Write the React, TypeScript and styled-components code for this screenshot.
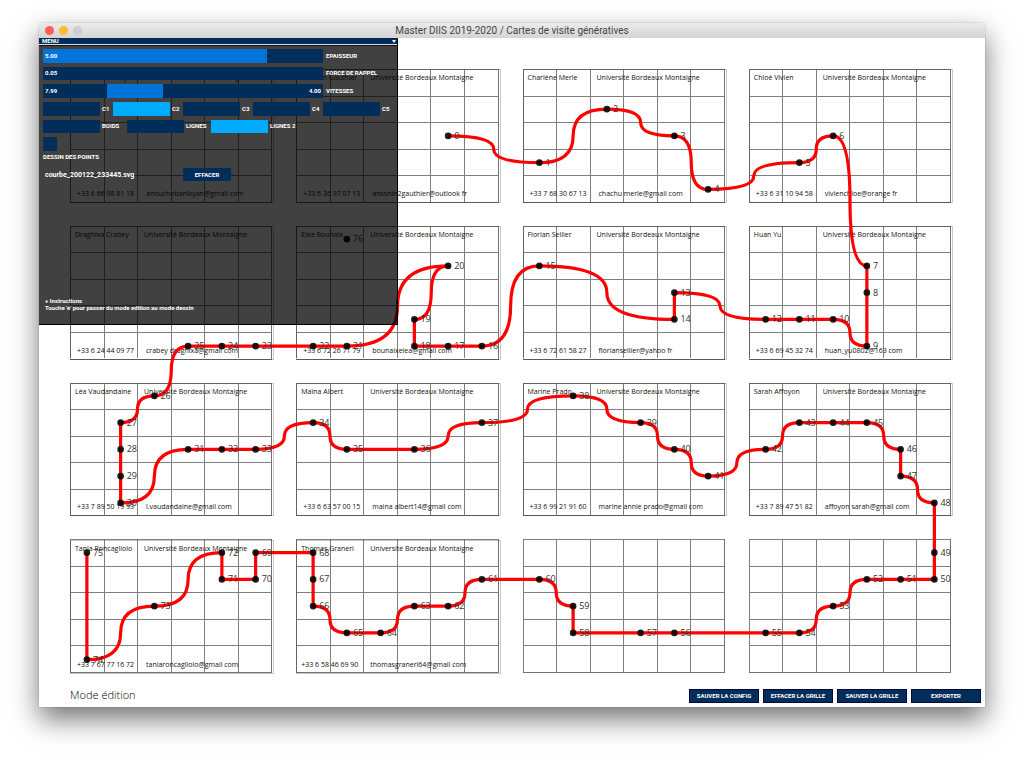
import React, { useState } from "react";
import styled, { createGlobalStyle } from "styled-components";

const GlobalStyle = createGlobalStyle`
  *, *::before, *::after { box-sizing: border-box; }
  body { margin: 0; background: #fff; font-family: "Open Sans", sans-serif; }
`;

const NAVY = "#002d5a";
const BLUE = "#0074d9";
const CYAN = "#00aaff";
const PIXEL_FONT = `Roboto, "Liberation Sans", sans-serif`;

const Desktop = styled.div`
  padding: 23px 39px 56px;
`;

const Window = styled.main`
  background: #fff;
  box-shadow: 0 0 1px rgba(0, 0, 0, 0.4), 0 12px 26px rgba(0, 0, 0, 0.55);
`;

const TitleBar = styled.header`
  display: grid;
  grid-template-columns: 1fr auto 1fr;
  align-items: center;
  height: 15px;
  padding: 0 6px;
  border-radius: 3px 3px 0 0;
  background: linear-gradient(#ebebeb, #d4d4d4);
`;

const Lights = styled.div`
  display: flex;
  gap: 5px;
`;

const Light = styled.button<{ $color: string }>`
  width: 9px;
  height: 9px;
  padding: 0;
  border: 0;
  border-radius: 50%;
  background: ${(p) => p.$color};
`;

const Title = styled.h1`
  margin: 0;
  font: 400 10px/15px Roboto, sans-serif;
  color: #444;
`;

const Canvas = styled.section`
  position: relative;
`;

const BoardArea = styled.div`
  padding: 31px 34px 16px 31px;
`;

const Board = styled.div`
  position: relative;
  display: grid;
  aspect-ratio: 881 / 604;
  grid-template-columns: 809fr 96fr 809fr 96fr 809fr 96fr 809fr;
  grid-template-rows: 535fr 92fr 535fr 92fr 535fr 92fr 535fr;
`;

const Card = styled.article<{ $col: number; $row: number }>`
  display: grid;
  grid-column: ${(p) => p.$col * 2 + 1};
  grid-row: ${(p) => p.$row * 2 + 1};
  min-width: 0;
  min-height: 0;

  & > * {
    grid-area: 1 / 1;
  }
`;

const Frame = styled.div<{ $shift: number }>`
  margin: ${(p) => p.$shift}px -2px -${(p) => p.$shift}px 0;
  border: 1px solid #c8c8c8;
`;

const Cells = styled.div`
  display: grid;
  grid-template: repeat(5, 1fr) / repeat(6, 1fr);
  border: solid rgba(0, 0, 0, 0.55);
  border-width: 0 1px 1px 0;
`;

const Cell = styled.span`
  border: solid rgba(0, 0, 0, 0.5);
  border-width: 1px 0 0 1px;
`;

const Details = styled.div<{ $shift: number }>`
  display: grid;
  grid-template-columns: 69px 1fr;
  align-content: space-between;
  padding: ${(p) => 4 + p.$shift}px 0 ${(p) => 4 - p.$shift}px 5px;
  font: 500 7px/10px "Open Sans", sans-serif;
  color: #111;
  white-space: nowrap;
`;

const Contact = styled.span<{ $indent: number }>`
  padding-left: ${(p) => p.$indent}px;
`;

const Drawing = styled.svg`
  position: absolute;
  inset: 0;
  width: 100%;
  height: 100%;
  overflow: visible;
`;

const PointLabel = styled.text`
  font: 400 9px "Open Sans", sans-serif;
  fill: #333;
`;

const Footer = styled.footer`
  display: flex;
  align-items: center;
  justify-content: space-between;
  padding: 0 4px 4px 31px;
`;

const Mode = styled.p`
  margin: 0;
  padding-bottom: 3px;
  font: 300 11px/11px "Open Sans", sans-serif;
  color: #000;
`;

const Actions = styled.div`
  display: flex;
  gap: 4px;
`;

const PixelButton = styled.button<{ $width: number; $framed?: boolean }>`
  width: ${(p) => p.$width}px;
  height: ${(p) => (p.$framed ? 14 : 13)}px;
  padding: 0;
  border: ${(p) => (p.$framed ? "1px solid #000a3c" : "0")};
  background: ${NAVY};
  color: #fff;
  font: 700 6px/12px ${PIXEL_FONT};
  text-transform: uppercase;
  white-space: nowrap;
`;

const Menu = styled.aside`
  position: absolute;
  top: 0;
  left: 0;
  display: flex;
  flex-direction: column;
  width: 359px;
  height: 287px;
  border: solid #000;
  border-width: 0 1px 1px 0;
  color: #fff;
  font: 700 6px/10px ${PIXEL_FONT};
`;

const MenuHeader = styled.button`
  display: flex;
  align-items: center;
  justify-content: space-between;
  flex: none;
  height: 7px;
  padding: 0 1px 0 3px;
  border: 0;
  border-bottom: 1px solid #d8dde4;
  overflow: hidden;
  background: ${NAVY};
  color: #fff;
  font: inherit;
  line-height: 6px;
`;

const MenuBody = styled.div`
  display: flex;
  flex: 1;
  flex-direction: column;
  padding: 3px 0 13px 4px;
  border-top: 1px solid #111;
  background: rgba(0, 0, 0, 0.745);
`;

const Controls = styled.div`
  display: grid;
  grid-auto-rows: 1fr;
  gap: 4px;
  height: 102px;
`;

const SliderRow = styled.label`
  display: grid;
  grid-template-columns: 280px 1fr;
  column-gap: 3px;
  align-items: center;
`;

const Track = styled.span<{ $from: number; $to: number }>`
  display: grid;
  height: 100%;
  align-items: center;
  background: linear-gradient(
    90deg,
    ${NAVY} ${(p) => p.$from}%,
    ${BLUE} ${(p) => p.$from}%,
    ${BLUE} ${(p) => p.$to}%,
    ${NAVY} ${(p) => p.$to}%
  );

  & > * {
    grid-area: 1 / 1;
  }
`;

const RangeInput = styled.input`
  appearance: none;
  width: 100%;
  height: 100%;
  margin: 0;
  background: transparent;
  pointer-events: none;

  &::-webkit-slider-thumb {
    appearance: none;
    width: 8px;
    height: 13px;
    background: transparent;
    pointer-events: auto;
  }
`;

const Value = styled.span`
  display: flex;
  justify-content: space-between;
  padding: 0 2px;
  pointer-events: none;
`;

const ToggleRow = styled.div<{ $pitch: number }>`
  display: grid;
  grid-template-columns: repeat(auto-fill, ${(p) => p.$pitch}px);
`;

const ToggleLabel = styled.label`
  display: flex;
  align-items: center;
  gap: 2px;
  white-space: nowrap;
`;

const Toggle = styled.input<{ $width: number }>`
  appearance: none;
  flex: none;
  width: ${(p) => p.$width}px;
  height: 100%;
  margin: 0;
  background: ${NAVY};

  &:checked {
    background: ${CYAN};
  }
`;

const Caption = styled.label`
  margin-top: 1px;
`;

const FileRow = styled.div`
  display: grid;
  grid-template-columns: 138px auto;
  align-items: center;
  justify-content: start;
  margin-top: 6px;
  padding-left: 2px;
  font-size: 7px;
`;

const Instructions = styled.p`
  margin: auto 0 0;
  padding-left: 2px;
  line-height: 7px;
`;

type Person = { name: string; phone: string; mail: string; indent?: number };

const SCHOOL = "Université Bordeaux Montaigne";

const PEOPLE: (Person | null)[] = [
  { name: "Anouche Banikyan", phone: "+33 6 66 98 81 18", mail: "anouchebanikyan@gmail com" },
  { name: "Antonin Gauthier", phone: "+33 6 36 97 07 13", mail: "antonin2gauthier@outlook fr" },
  { name: "Charlène Merle", phone: "+33 7 68 30 67 13", mail: "chachu merle@gmail com" },
  { name: "Chloé Vivien", phone: "+33 6 31 10 94 58", mail: "vivienchloe@orange fr" },
  { name: "Draghixa Crabey", phone: "+33 6 24 44 09 77", mail: "crabey draghixa@gmail com" },
  { name: "Eléa Bounaix", phone: "+33 6 72 26 71 79", mail: "bounaixelea@gmail com" },
  { name: "Florian Sellier", phone: "+33 6 72 61 58 27", mail: "floriansellier@yahoo fr" },
  { name: "Huan Yu", phone: "+33 6 69 45 32 74", mail: "huan_yu0802@163 com" },
  { name: "Léa Vaudandaine", phone: "+33 7 89 50 19 93", mail: "l.vaudandaine@gmail com" },
  { name: "Maïna Albert", phone: "+33 6 63 57 00 15", mail: "maina albert14@gmail com" },
  { name: "Marine Prado", phone: "+33 6 99 21 91 60", mail: "marine annie prado@gmail com" },
  { name: "Sarah Affoyon", phone: "+33 7 89 47 51 82", mail: "affoyon sarah@gmail com" },
  { name: "Tania Roncagliolo", phone: "+33 7 67 77 16 72", mail: "taniaroncagliolo@gmail com" },
  { name: "Thomas Graneri", phone: "+33 6 58 46 69 90", mail: "thomasgraneri64@gmail com", indent: 0 },
  null,
  null,
];

/* Each point: card column, card row, cell column, cell row. */
const POINTS = (
  "1042 2003 2021 2042 2054 3013 3022 3131 3132 3134 3123 3113 3103 2142 2143 2101 1154 1144 1134 1133 " +
  "1141 1114 1104 0154 0144 0134 0220 0211 0212 0213 0214 0232 0242 0252 1201 1212 1232 1251 2210 2231 " +
  "2242 2253 3202 3211 3221 3231 3242 3243 3254 3350 3351 3341 3331 3322 3313 3303 2343 2333 2313 2312 " +
  "2301 1351 1342 1332 1323 1313 1302 1301 1300 0350 0351 0341 0340 0322 0304 0300 1110"
)
  .split(" ")
  .map((code) => {
    const [cardX, cardY, cellX, cellY] = code.split("").map(Number);
    return { x: 226.25 * cardX + 33.75 * (cellX + 0.5), y: 156.75 * cardY + 26.75 * (cellY + 0.5) };
  });

/* The last point is not joined to the curve. */
const CURVE = POINTS.slice(0, -1)
  .map((p, i, all) => {
    if (i === 0) return `M${p.x} ${p.y}`;
    const prev = all[i - 1];
    const mx = (prev.x + p.x) / 2;
    const my = (prev.y + p.y) / 2;
    return `Q${mx} ${prev.y} ${mx} ${my} Q${mx} ${p.y} ${p.x} ${p.y}`;
  })
  .join(" ");

const CELLS = Array.from({ length: 30 }, (_, i) => i);
const ROW_SHIFT = [0, 0, 0, 1];

function BusinessCard({ person, index }: { person: Person | null; index: number }) {
  const row = Math.floor(index / 4);
  const shift = ROW_SHIFT[row];
  return (
    <Card $col={index % 4} $row={row}>
      {person && <Frame $shift={shift} />}
      <Cells aria-hidden="true">
        {CELLS.map((c) => (
          <Cell key={c} />
        ))}
      </Cells>
      {person && (
        <Details $shift={shift}>
          <span>{person.name}</span>
          <span>{SCHOOL}</span>
          <Contact $indent={person.indent ?? 2}>{person.phone}</Contact>
          <Contact $indent={person.indent ?? 2}>{person.mail}</Contact>
        </Details>
      )}
    </Card>
  );
}

function Slider({ label, value, max }: { label: string; value: number; max: number }) {
  const [current, setCurrent] = useState(value);
  return (
    <SliderRow>
      <Track $from={0} $to={(current / max) * 100}>
        <RangeInput
          type="range"
          min={0}
          max={max}
          step={0.01}
          value={current}
          onChange={(e) => setCurrent(Number(e.target.value))}
        />
        <Value>{current.toFixed(2)}</Value>
      </Track>
      {label}
    </SliderRow>
  );
}

function SpeedRange() {
  return (
    <SliderRow as="div">
      <Track $from={23} $to={43}>
        <RangeInput type="range" aria-label="Vitesse minimale" defaultValue={23} />
        <RangeInput type="range" aria-label="Vitesse maximale" defaultValue={43} />
        <Value>
          <span>7.99</span>
          <span>4.00</span>
        </Value>
      </Track>
      VITESSES
    </SliderRow>
  );
}

function Toggles({ items, active, pitch }: { items: string[]; active: string; pitch: number }) {
  return (
    <ToggleRow $pitch={pitch}>
      {items.map((item) => (
        <ToggleLabel key={item}>
          <Toggle type="checkbox" $width={57} defaultChecked={item === active} />
          {item}
        </ToggleLabel>
      ))}
    </ToggleRow>
  );
}

export default function App() {
  return (
    <Desktop>
      <GlobalStyle />
      <Window>
        <TitleBar>
          <Lights>
            <Light $color="#ff5f57" aria-label="Fermer" />
            <Light $color="#fdbc2e" aria-label="Réduire" />
            <Light $color="#cdcdcd" aria-label="Agrandir" />
          </Lights>
          <Title>Master DIIS 2019-2020 / Cartes de visite génératives</Title>
        </TitleBar>
        <Canvas>
          <BoardArea>
            <Board>
              {PEOPLE.map((person, i) => (
                <BusinessCard key={i} person={person} index={i} />
              ))}
              <Drawing viewBox="0 0 881 604">
                <path d={CURVE} fill="none" stroke="#f00" strokeWidth="3.2" strokeLinejoin="round" />
                {POINTS.map((p, i) => (
                  <g key={i}>
                    <circle cx={p.x} cy={p.y} r="3.3" fill="#000" fillOpacity="0.88" />
                    <PointLabel x={p.x + 6} y={p.y + 3}>
                      {i}
                    </PointLabel>
                  </g>
                ))}
              </Drawing>
            </Board>
          </BoardArea>
          <Footer>
            <Mode>Mode édition</Mode>
            <Actions>
              {["Sauver la config", "Effacer la grille", "Sauver la grille", "Exporter"].map((t) => (
                <PixelButton key={t} $width={70} $framed>
                  {t}
                </PixelButton>
              ))}
            </Actions>
          </Footer>
          <Menu>
            <MenuHeader>
              MENU
              <svg width="4" height="3" viewBox="0 0 4 3" aria-hidden="true">
                <path d="M0 0H4L2 3Z" fill="#fff" />
              </svg>
            </MenuHeader>
            <MenuBody>
              <Controls>
                <Slider label="EPAISSEUR" value={5} max={6.25} />
                <Slider label="FORCE DE RAPPEL" value={0.05} max={100} />
                <SpeedRange />
                <Toggles items={["C1", "C2", "C3", "C4", "C5"]} active="C2" pitch={70} />
                <Toggles items={["BOIDS", "LIGNES", "LIGNES 2"]} active="LIGNES 2" pitch={84} />
                <Toggle id="points" type="checkbox" $width={14} />
              </Controls>
              <Caption htmlFor="points">DESSIN DES POINTS</Caption>
              <FileRow>
                <span>courbe_200122_233445.svg</span>
                <PixelButton $width={48}>Effacer</PixelButton>
              </FileRow>
              <Instructions>
                + Instructions
                <br />
                Touche 'e' pour passer du mode edition au mode dessin
              </Instructions>
            </MenuBody>
          </Menu>
        </Canvas>
      </Window>
    </Desktop>
  );
}
